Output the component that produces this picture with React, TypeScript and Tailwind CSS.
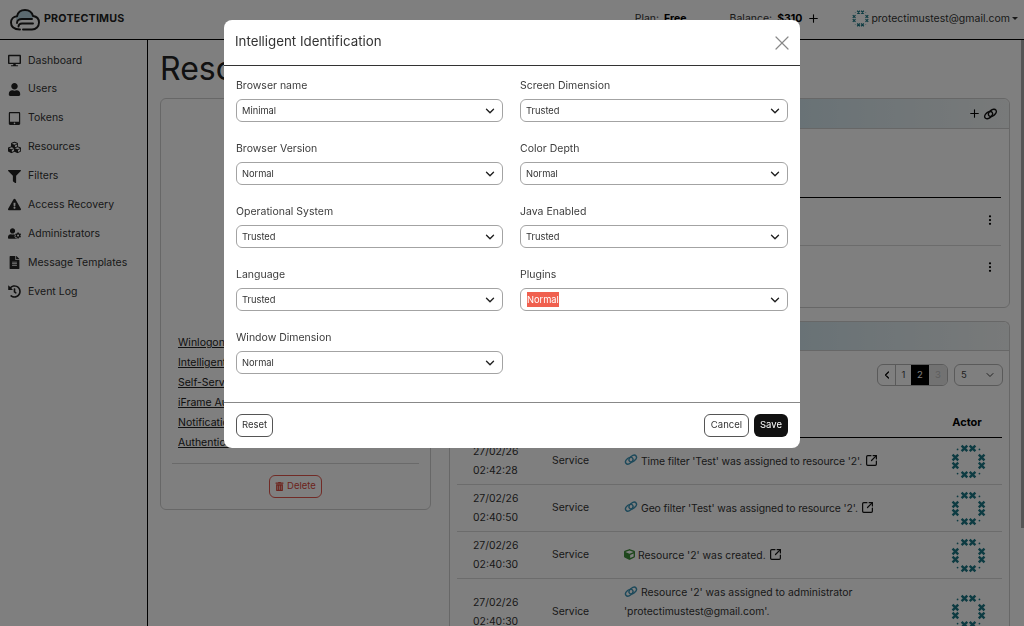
import { ChevronDown, ChevronLeft, Plus, SquareArrowOutUpRight, X } from "lucide-react";
import { BsThreeDotsVertical } from "react-icons/bs";
import {
    FaCube,
    FaCubes,
    FaDesktop,
    FaExclamationTriangle,
    FaFileAlt,
    FaFilter,
    FaHistory,
    FaTabletAlt,
    FaTrashAlt,
    FaUser,
    FaUserCog,
} from "react-icons/fa";

const navItems = [
    { label: "Dashboard", icon: FaDesktop },
    { label: "Users", icon: FaUser },
    { label: "Tokens", icon: FaTabletAlt },
    { label: "Resources", icon: FaCubes },
    { label: "Filters", icon: FaFilter },
    { label: "Access Recovery", icon: FaExclamationTriangle },
    { label: "Administrators", icon: FaUserCog },
    { label: "Message Templates", icon: FaFileAlt },
    { label: "Event Log", icon: FaHistory },
];

const settingLinks = [
    "Winlogon Settings",
    "Intelligent Identification",
    "Self-Service Settings",
    "iFrame Authentication",
    "Notification Settings",
    "Authentication",
];

const leftFields = [
    { label: "Browser name", value: "Minimal" },
    { label: "Browser Version", value: "Normal" },
    { label: "Operational System", value: "Trusted" },
    { label: "Language", value: "Trusted" },
    { label: "Window Dimension", value: "Normal" },
];

const rightFields = [
    { label: "Screen Dimension", value: "Trusted" },
    { label: "Color Depth", value: "Normal" },
    { label: "Java Enabled", value: "Trusted" },
    { label: "Plugins", value: "Normal", selected: true },
];

function Logo() {
    return (
        <svg width="30" height="22" viewBox="0 0 30 22" fill="none">
            <path d="M6 12C7 11 9 10 12 10H23C23 5 19 1 15 1C11 1 8 3.5 7 7.2C6 9 6 10 6 12Z" fill="#b8d4e0" />
            <path
                d="M10 20.5C4 20.5 1 17.5 1 13.5C1 10 3.5 7.5 7 7.2C8 3 11.5 1 15 1C19 1 22 3.5 23 7C26.5 7.5 29 10 29 13.5C29 17.5 26 20.5 22 20.5H13"
                stroke="#1c1c1c"
                strokeWidth="1.9"
                strokeLinecap="round"
            />
            <path d="M7 14C7 11.5 9 10 12 10H22" stroke="#1c1c1c" strokeWidth="1.9" strokeLinecap="round" />
            <path d="M23 14.5H12C9.5 14.5 8.5 16 8.5 17.5" stroke="#1c1c1c" strokeWidth="1.9" strokeLinecap="round" />
        </svg>
    );
}

function Avatar({ size }: { size: number }) {
    const crosses = [
        [12.3, 4], [19.7, 4], [12.3, 28], [19.7, 28],
        [4, 12.3], [4, 19.7], [28, 12.3], [28, 19.7],
    ];
    const dots = [[6, 5], [26, 5], [6, 27], [26, 27]];
    return (
        <svg width={size} height={size} viewBox="0 0 32 32">
            {crosses.map(([x, y]) => (
                <g key={`${x}-${y}`} stroke="#1c7785" strokeWidth="2.2">
                    <path d={`M${x - 2.6} ${y - 2.6}L${x + 2.6} ${y + 2.6}M${x + 2.6} ${y - 2.6}L${x - 2.6} ${y + 2.6}`} />
                </g>
            ))}
            {dots.map(([x, y]) => (
                <circle key={`${x}-${y}`} cx={x} cy={y} r="0.8" fill="#1c7785" />
            ))}
        </svg>
    );
}

function ChainIcon({ color, size }: { color: string; size: number }) {
    return (
        <svg width={size} height={size * 0.8} viewBox="0 0 20 16" fill="none" stroke={color} strokeWidth="2" className="inline align-[-1px]">
            <ellipse cx="7.5" cy="9.5" rx="6" ry="3.8" transform="rotate(-38 7.5 9.5)" />
            <ellipse cx="12.5" cy="6.5" rx="6" ry="3.8" transform="rotate(-38 12.5 6.5)" />
        </svg>
    );
}

function SelectBox({ value, selected }: { value: string; selected?: boolean }) {
    return (
        <div className="flex h-[23px] items-center justify-between rounded-[6px] border border-[#a3a3a3] bg-white pl-[5px] pr-[5px]">
            {selected ? (
                <span className="ml-[1px] bg-[#f0604f] text-[9.3px] leading-[15px] text-white">{value}</span>
            ) : (
                <span className="text-[9.3px] text-[#333]">{value}</span>
            )}
            <ChevronDown className="h-[14px] w-[14px] text-[#222]" strokeWidth={2.4} />
        </div>
    );
}

function Field({ label, value, selected }: { label: string; value: string; selected?: boolean }) {
    return (
        <div className="h-[63px]">
            <div className="mb-[5px] pt-[5px] text-[10.5px] leading-[16px] text-[#3c3c3c]">{label}</div>
            <SelectBox value={value} selected={selected} />
        </div>
    );
}

function LogRow({ date, time, children, tall }: { date: string; time: string; children: React.ReactNode; tall?: boolean }) {
    return (
        <div className={`flex items-center border-b border-[#d8d8d8] text-[10.4px] text-[#333] ${tall ? "h-[66px]" : "h-[47px] shrink-0"}`}>
            <div className="w-[95px] shrink-0 pl-4 leading-[19px]">
                {date}
                <br />
                {time}
            </div>
            <div className="w-[72px] shrink-0">Service</div>
            <div className="flex-1 leading-[19px]">{children}</div>
            <div className="flex w-[68px] shrink-0 justify-center">
                <Avatar size={35} />
            </div>
        </div>
    );
}

function LinkIcon() {
    return (
        <span className="mr-[3px]">
            <ChainIcon color="#3a92b5" size={14} />
        </span>
    );
}

function OutIcon() {
    return <SquareArrowOutUpRight className="ml-[3px] inline h-[13px] w-[13px] align-[-2px] text-[#111]" strokeWidth={2.2} />;
}

export default function App() {
    return (
        <div className="relative flex h-[626px] w-[1024px] flex-col overflow-hidden bg-white font-['Inter',sans-serif]">
            {/* Top bar */}
            <div className="flex h-[40px] shrink-0 items-center border-b border-black pl-[10px] pr-[6px]">
                <Logo />
                <span className="ml-[4px] text-[10.7px] font-bold tracking-[0.2px] text-[#222]">PROTECTIMUS</span>
                <div className="ml-auto flex items-center pb-[2px] text-[10.5px] text-[#333]">
                    <span>Plan:</span>
                    <span className="ml-[5px] font-bold text-black">Free</span>
                    <span className="ml-[43px]">Balance:</span>
                    <span className="ml-[5px] font-bold text-black">$310</span>
                    <Plus className="ml-[5px] h-[13px] w-[13px] text-black" />
                    <div className="ml-[32px] mr-[2px]">
                        <Avatar size={17} />
                    </div>
                    <span>protectimustest@gmail.com</span>
                    <span className="ml-[2px] border-x-[3px] border-t-[3px] border-x-transparent border-t-[#333]" />
                </div>
            </div>

            <div className="flex min-h-0 flex-1">
                {/* Sidebar */}
                <div className="w-[148px] shrink-0 border-r border-black pt-[6px]">
                    {navItems.map(({ label, icon: Icon }) => (
                        <div key={label} className="flex h-[28.9px] items-center pl-2 text-[10.5px] text-[#333]">
                            <span className="flex w-[20px] shrink-0">
                                <Icon className="h-[13px] w-[13px] text-[#222]" />
                            </span>
                            {label}
                        </div>
                    ))}
                </div>

                {/* Main */}
                <div className="min-w-0 flex-1 pl-3 pr-[14px]">
                    <h1 className="mt-[9px] h-[49px] text-[32px] leading-[40px] text-[#222]">Resources</h1>
                    <div className="flex gap-[18px]">
                        <div className="flex h-[412px] w-[271px] shrink-0 flex-col rounded-[6px] border border-[#cfcfcf] px-[11px]">
                            <div className="mt-[235px] flex flex-col gap-[3px] pl-[6px] text-[10.5px] text-[#222]">
                                {settingLinks.map((link) => (
                                    <a key={link} className="leading-[17px] underline">
                                        {link}
                                    </a>
                                ))}
                            </div>
                            <div className="mt-[12px] border-t border-[#d5d5d5]" />
                            <button className="mx-auto mt-[11px] flex h-[23px] items-center gap-[3px] rounded-[6px] border border-[#e2574c] px-[5px] text-[9.5px] text-[#d9483b]">
                                <FaTrashAlt className="h-[9px] w-[9px]" />
                                Delete
                            </button>
                        </div>

                        <div className="flex min-w-0 flex-1 flex-col gap-[13px]">
                            <div className="h-[210px] rounded-[6px] border border-[#cfcfcf]">
                                <div className="flex h-[30px] items-center justify-end gap-[2px] rounded-t-[6px] border-b border-[#cfcfcf] bg-gradient-to-r from-[#e6f3ec] via-[#c8e0ea] to-[#f1f4f4] pr-[11px]">
                                    <Plus className="h-[13px] w-[13px] text-black" />
                                    <ChainIcon color="#111" size={15} />
                                </div>
                                <div className="mx-2 mt-[68px] flex h-[48px] items-center justify-end border-t border-black pb-[4px] pr-[5px]">
                                    <BsThreeDotsVertical className="h-[12px] w-[12px] text-black" />
                                </div>
                                <div className="mx-2 flex h-[48px] items-center justify-end border-t border-[#d8d8d8] pb-[6px] pr-[5px]">
                                    <BsThreeDotsVertical className="h-[12px] w-[12px] text-black" />
                                </div>
                            </div>

                            <div className="flex min-h-0 flex-1 flex-col rounded-t-[6px] border border-b-0 border-[#cfcfcf]">
                                <div className="h-[29px] shrink-0 rounded-t-[6px] border-b border-[#cfcfcf] bg-gradient-to-r from-[#e6f3ec] via-[#c8e0ea] to-[#f1f4f4]" />
                                <div className="mt-[13px] flex shrink-0 justify-end gap-[6px] pr-[6px] text-[9.5px] text-[#444]">
                                    <div className="flex h-[22px] items-stretch overflow-hidden rounded-[6px] border border-[#b5b5b5]">
                                        <span className="flex w-[18px] items-center justify-center border-r border-[#b5b5b5]">
                                            <ChevronLeft className="h-[12px] w-[12px] text-black" strokeWidth={2.4} />
                                        </span>
                                        <span className="flex w-[15px] items-center justify-center">1</span>
                                        <span className="flex w-[18px] items-center justify-center bg-black text-white">2</span>
                                        <span className="flex w-[18px] items-center justify-center bg-[#e5e5e5] text-[#bbb]">3</span>
                                    </div>
                                    <div className="flex h-[22px] w-[49px] items-center justify-between rounded-[6px] border border-[#b5b5b5] px-[6px]">
                                        5
                                        <ChevronDown className="h-[12px] w-[12px]" />
                                    </div>
                                </div>
                                <div className="mx-[7px] flex h-[52px] shrink-0 items-end justify-end border-b border-black pb-[7px]">
                                    <span className="w-[70px] text-center text-[11px] font-bold text-black">Actor</span>
                                </div>
                                <div className="mx-[7px]">
                                    <LogRow date="27/02/26" time="02:42:28">
                                        <LinkIcon />
                                        <span className="tracking-[-0.1px]">Time filter 'Test' was assigned to resource '2'.</span>
                                        <OutIcon />
                                    </LogRow>
                                    <LogRow date="27/02/26" time="02:40:50">
                                        <LinkIcon />
                                        <span className="tracking-[-0.1px]">Geo filter 'Test' was assigned to resource '2'.</span>
                                        <OutIcon />
                                    </LogRow>
                                    <LogRow date="27/02/26" time="02:40:30">
                                        <FaCube className="mr-[3px] inline h-[11px] w-[11px] align-[-1px] text-[#3f8f3a]" />
                                        Resource '2' was created.
                                        <OutIcon />
                                    </LogRow>
                                    <LogRow date="27/02/26" time="02:40:30" tall>
                                        <LinkIcon />Resource '2' was assigned to administrator
                                        <br />
                                        'protectimustest@gmail.com'.
                                        <br />
                                        Details
                                    </LogRow>
                                </div>
                            </div>
                        </div>
                    </div>
                </div>
            </div>

            {/* Modal */}
            <div className="fixed inset-0 z-50 flex items-start justify-center bg-black/50 pt-5">
                <div className="w-[576px] overflow-hidden rounded-[8px] bg-white">
                    <div className="flex h-[46px] items-center justify-between border-b border-[#333] pl-[11px] pr-[6px]">
                        <span className="pb-[1px] text-[13.3px] text-[#333]">Intelligent Identification</span>
                        <X className="h-6 w-6 text-[#888]" strokeWidth={1.2} />
                    </div>
                    <div className="flex h-[336px] gap-[17px] px-[12px] pt-[7px]">
                        <div className="w-[267px]">
                            {leftFields.map((f) => (
                                <Field key={f.label} label={f.label} value={f.value} />
                            ))}
                        </div>
                        <div className="w-[268px]">
                            {rightFields.map((f) => (
                                <Field key={f.label} label={f.label} value={f.value} selected={f.selected} />
                            ))}
                        </div>
                    </div>
                    <div className="flex h-[46px] items-center justify-between border-t border-[#888] px-[12px] text-[9.5px]">
                        <button className="h-[23px] rounded-[6px] border border-[#555] px-[5px] text-[#333]">Reset</button>
                        <div className="flex gap-[5px]">
                            <button className="h-[23px] rounded-[6px] border border-[#555] px-[6px] text-[#333]">Cancel</button>
                            <button className="h-[23px] rounded-[6px] bg-[#111] px-[6px] text-white">Save</button>
                        </div>
                    </div>
                </div>
            </div>

            {/* Scrollbar thumb */}
            <div className="absolute right-0 top-[40px] z-50 h-[488px] w-[3px] bg-[#555]" />
        </div>
    );
}
